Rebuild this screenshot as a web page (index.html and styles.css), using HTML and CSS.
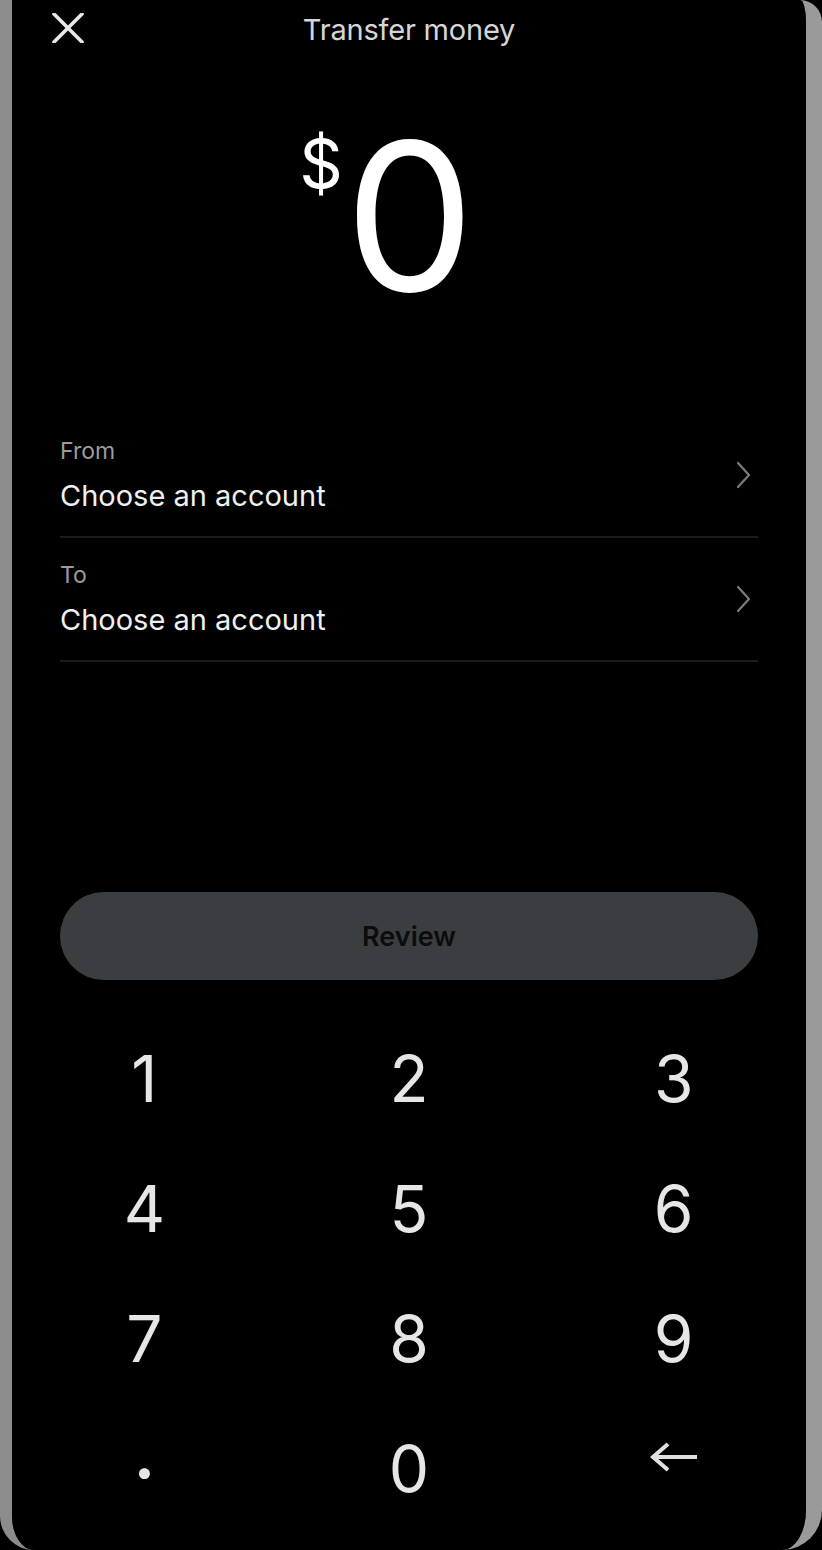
FILE: index.html
```html
<!DOCTYPE html>
<html lang="en">
<head>
<meta charset="utf-8">
<title>Transfer money</title>
<link rel="stylesheet" href="styles.css">
</head>
<body>
<div class="device">
  <div class="screen">
    <header class="topbar">
      <button class="close" aria-label="Close">
        <svg viewBox="0 0 32 30" width="32" height="30"><path d="M2 1 L30 29 M30 1 L2 29" fill="none" stroke="#e8e8e8" stroke-width="3.6" stroke-linecap="round"/></svg>
      </button>
      <h1 class="title">Transfer money</h1>
      <span class="spacer"></span>
    </header>

    <div class="amount">
      <span class="currency">$</span><span class="value">0</span>
    </div>

    <div class="accounts">
      <button class="account-row">
        <span class="account-text">
          <span class="account-label">From</span>
          <span class="account-value">Choose an account</span>
        </span>
        <svg class="chevron" viewBox="0 0 16 28" width="16" height="28"><path d="M2 2 L13 14 L2 26" fill="none" stroke="#7c7c7c" stroke-width="2.2" stroke-linecap="round" stroke-linejoin="round"/></svg>
      </button>
      <button class="account-row">
        <span class="account-text">
          <span class="account-label">To</span>
          <span class="account-value">Choose an account</span>
        </span>
        <svg class="chevron" viewBox="0 0 16 28" width="16" height="28"><path d="M2 2 L13 14 L2 26" fill="none" stroke="#7c7c7c" stroke-width="2.2" stroke-linecap="round" stroke-linejoin="round"/></svg>
      </button>
    </div>

    <button class="review">Review</button>

    <div class="keypad">
      <button class="key">1</button>
      <button class="key">2</button>
      <button class="key">3</button>
      <button class="key">4</button>
      <button class="key">5</button>
      <button class="key">6</button>
      <button class="key">7</button>
      <button class="key">8</button>
      <button class="key">9</button>
      <button class="key key-dot">·</button>
      <button class="key">0</button>
      <button class="key key-back" aria-label="Delete">
        <svg viewBox="0 0 50 32" width="50" height="32"><path d="M48 15 L4 15 M19 2 L4 15 L19 28" fill="none" stroke="#e0e0e0" stroke-width="4" stroke-linecap="butt" stroke-linejoin="miter"/></svg>
      </button>
    </div>
  </div>
</div>
</body>
</html>
```

FILE: styles.css
```css
* { box-sizing: border-box; }

html, body {
  margin: 0;
  padding: 0;
  background: #000;
}

body {
  font-family: Inter, "Noto Sans", sans-serif;
  color: #fff;
}

button {
  font: inherit;
  color: inherit;
  background: none;
  border: 0;
  padding: 0;
  cursor: pointer;
}

.device {
  width: 822px;
  height: 1550px;
  overflow: hidden;
  border-style: solid;
  border-width: 0 16px 0 12px;
  border-left-color: #8c8c8c;
  border-right-color: #9a9a9a;
  border-radius: 0 22px 40px 34px;
  background: #000;
  box-shadow: inset 3px 0 2px #5a5a5a, inset -3px 0 2px #5f5f5f;
}

.screen {
  height: 100%;
  display: flex;
  flex-direction: column;
  background: #000;
}

.topbar {
  height: 58px;
  display: grid;
  grid-template-columns: 1fr auto 1fr;
  align-items: center;
  padding: 0 40px;
}

.close {
  width: 32px;
  height: 30px;
  display: flex;
  margin-top: -2px;
}

.title {
  margin: 0;
  font-size: 29px;
  font-weight: 400;
  color: #d6d6d6;
  letter-spacing: -0.2px;
}

.amount {
  display: flex;
  justify-content: center;
  margin-top: 55px;
  padding-right: 44px;
}

.currency {
  font-size: 68px;
  line-height: 1;
  margin-top: 16px;
  margin-right: 2px;
  color: #fff;
}

.value {
  font-size: 206px;
  line-height: 1;
  font-weight: 400;
  color: #fff;
}

.accounts {
  margin-top: 95px;
  padding: 0 48px;
  display: flex;
  flex-direction: column;
}

.account-row {
  display: flex;
  align-items: center;
  justify-content: space-between;
  text-align: left;
  padding: 22px 6px 22px 0;
  border-bottom: 2px solid #1b1b1b;
}

.account-text {
  display: flex;
  flex-direction: column;
  gap: 12px;
}

.account-label {
  font-size: 23px;
  line-height: 30px;
  color: #9c9c9c;
}

.account-value {
  font-size: 29px;
  line-height: 36px;
  color: #f0f0f0;
}

.chevron {
  display: block;
}

.review {
  margin: 230px 48px 0;
  height: 88px;
  border-radius: 44px;
  background: #3a3e41;
  color: #0c0c0c;
  font-size: 27px;
  font-weight: 600;
}

.keypad {
  margin-top: 34px;
  display: grid;
  grid-template-columns: repeat(3, 1fr);
  grid-auto-rows: 130px;
}

.key {
  font-size: 64px;
  line-height: 130px;
  color: #e6e6e6;
  display: flex;
  align-items: center;
  justify-content: center;
}

.key-dot {
  font-weight: 700;
  padding-top: 8px;
}

.key-back svg {
  margin-bottom: 22px;
}
```
